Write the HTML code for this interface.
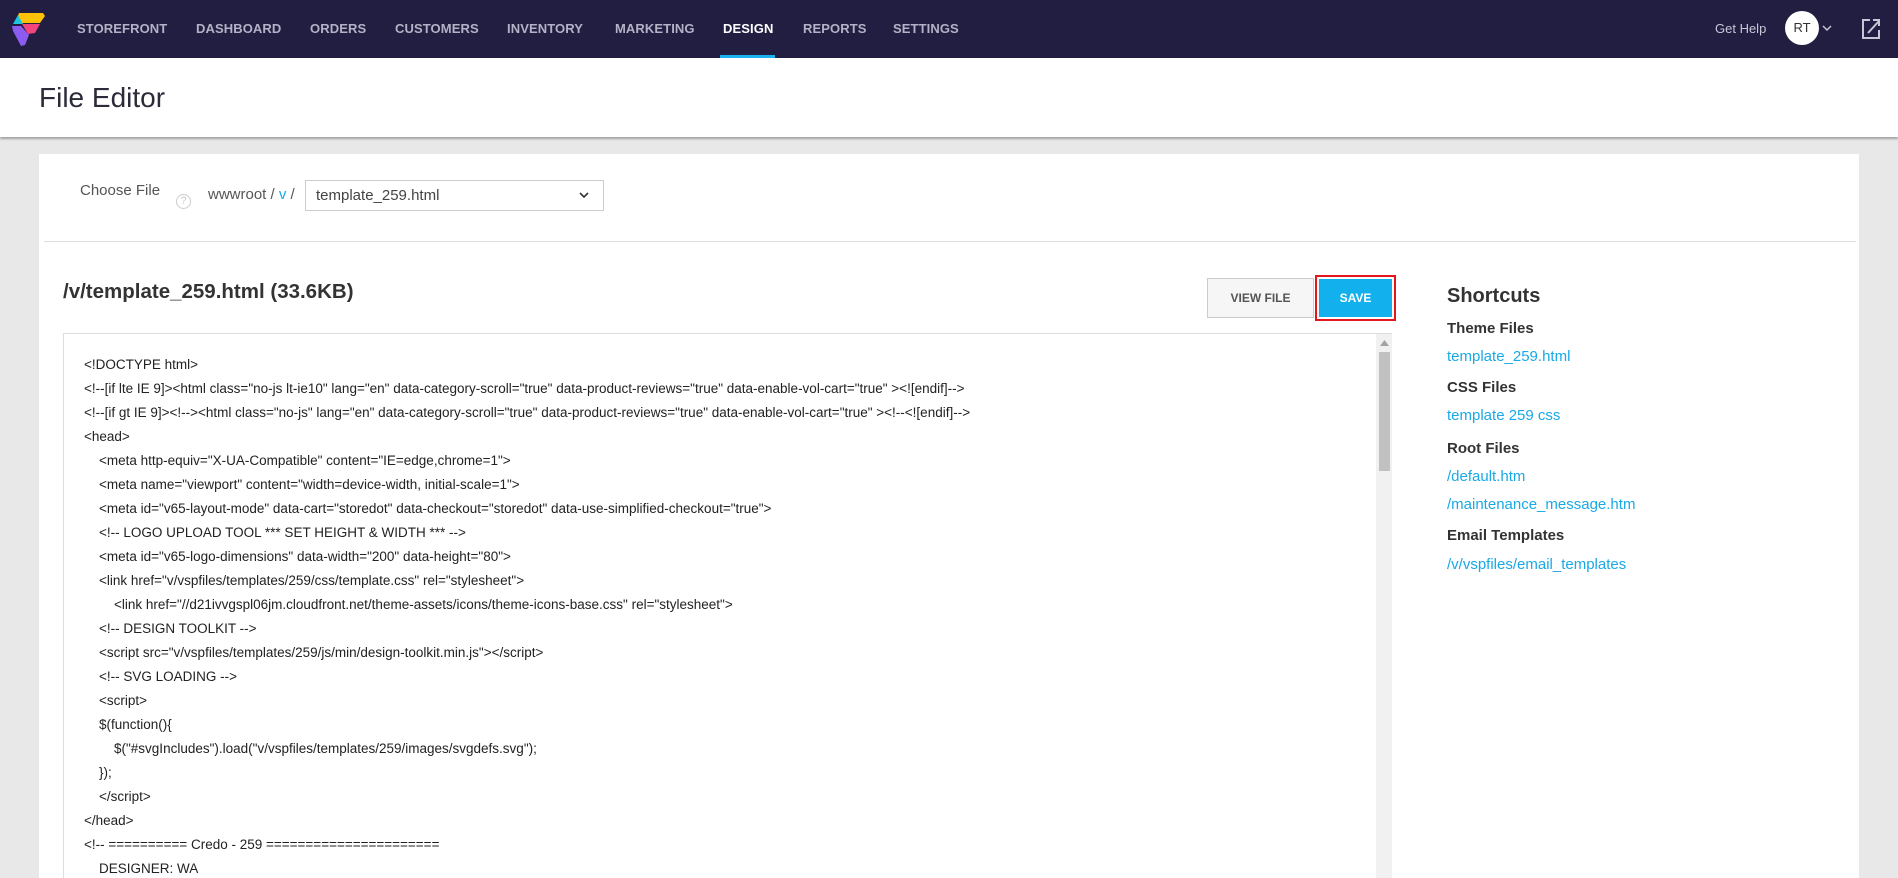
<!DOCTYPE html>
<html><head><style>
*{margin:0;padding:0;box-sizing:border-box}
html,body{width:1898px;height:878px;overflow:hidden}
body{background:#e8e8e8;font-family:"Liberation Sans",sans-serif;position:relative}
.nav{position:absolute;left:0;top:0;width:1898px;height:58px;background:#211e41}
.nav a{position:absolute;top:21px;font-size:13px;font-weight:bold;color:#b4b2c6;letter-spacing:0.1px}
.nav a.act{color:#fff}
.ul{position:absolute;left:720px;top:55px;width:55px;height:3px;background:#19b2ee}
.hdr{position:absolute;left:0;top:58px;width:1898px;height:79px;background:#fff;box-shadow:0 2px 2px rgba(0,0,0,.3)}
.hdr h1{position:absolute;left:39px;top:24px;font-size:28px;font-weight:normal;color:#2b2b3a}
.card{position:absolute;left:39px;top:154px;width:1820px;height:724px;background:#fff}
.a{position:absolute;white-space:nowrap}
.code{position:absolute;left:63px;top:333px;width:1329px;height:545px;border:1px solid #ddd;border-right:none;border-bottom:none;overflow:hidden}
.code div{position:absolute;white-space:pre;font-size:13.5px;color:#222}
.lnk{color:#19a9e6;font-size:15px}
.sh{font-size:15px;font-weight:bold;color:#333}
</style></head><body>
<div class="nav">
<svg style="position:absolute;left:0;top:0" width="60" height="58"><polygon points="19,13 43,13 45,16 40,23 22,23 17,18" fill="#ffc107"/><polygon points="22,24 40,24 35,33 28,34" fill="#f2457e"/><polygon points="13,24 18,15 23,24" fill="#1cc5e0"/><polygon points="12,26 21,26 29,35 25,45 21,46 13,31" fill="#8c5cf0"/></svg>
<a style="left:77px">STOREFRONT</a><a style="left:196px">DASHBOARD</a><a style="left:310px">ORDERS</a><a style="left:395px">CUSTOMERS</a><a style="left:507px">INVENTORY</a><a style="left:615px">MARKETING</a><a class="act" style="left:723px">DESIGN</a><a style="left:803px">REPORTS</a><a style="left:893px">SETTINGS</a>
<div class="ul"></div>
<span class="a" style="left:1715px;top:21px;font-size:13px;color:#c8c6d6">Get Help</span>
<div class="a" style="left:1785px;top:11px;width:34px;height:34px;border-radius:50%;background:#fff;color:#333;font-size:13px;text-align:center;line-height:34px">RT</div>
<svg class="a" style="left:1822px;top:24px" width="10" height="8"><path d="M1 2 L5 6 L9 2" stroke="#c8c6d6" stroke-width="1.5" fill="none"/></svg>
<svg class="a" style="left:1861px;top:18px" width="20" height="22"><path d="M9 2 H2 V20 H18 V12" stroke="#c8c6d6" stroke-width="2" fill="none"/><path d="M7 15 L18 3 M12 2 H18 V8" stroke="#c8c6d6" stroke-width="2" fill="none"/></svg>
</div>
<div class="hdr"><h1>File Editor</h1></div>
<div class="card"></div>
<span class="a" style="left:80px;top:182px;font-size:15px;color:#555">Choose File</span>
<div class="a" style="left:176px;top:194px;width:15px;height:15px;border:1px solid #ccc;border-radius:50%;font-size:11px;color:#ccc;text-align:center;line-height:13px">?</div>
<span class="a" style="left:208px;top:186px;font-size:15px;color:#555">wwwroot / <span style="color:#19a9e6">v</span> /</span>
<div class="a" style="left:305px;top:180px;width:299px;height:31px;border:1px solid #ccc"></div>
<span class="a" style="left:316px;top:187px;font-size:15px;color:#444">template_259.html</span>
<svg class="a" style="left:578px;top:191px" width="12" height="8"><path d="M2 2 L6 6 L10 2" stroke="#333" stroke-width="1.6" fill="none"/></svg>
<div class="a" style="left:44px;top:241px;width:1812px;height:1px;background:#ddd"></div>
<span class="a" style="left:63px;top:280px;font-size:20.5px;font-weight:bold;color:#333">/v/template_259.html (33.6KB)</span>
<div class="a" style="left:1207px;top:278px;width:107px;height:40px;border:1px solid #ccc;background:#f6f6f6;font-size:12px;font-weight:bold;color:#555;text-align:center;line-height:38px">VIEW FILE</div>
<div class="a" style="left:1315px;top:275px;width:81px;height:46px;border:2px solid #e3151d"></div>
<div class="a" style="left:1319px;top:279px;width:73px;height:38px;background:#12b1ee;font-size:12px;font-weight:bold;color:#fff;text-align:center;line-height:38px">SAVE</div>
<div class="code">
<div style="left:20px;top:23px">&lt;!DOCTYPE html&gt;</div>
<div style="left:20px;top:47px">&lt;!--[if lte IE 9]&gt;&lt;html class="no-js lt-ie10" lang="en" data-category-scroll="true" data-product-reviews="true" data-enable-vol-cart="true" &gt;&lt;![endif]--&gt;</div>
<div style="left:20px;top:71px">&lt;!--[if gt IE 9]&gt;&lt;!--&gt;&lt;html class="no-js" lang="en" data-category-scroll="true" data-product-reviews="true" data-enable-vol-cart="true" &gt;&lt;!--&lt;![endif]--&gt;</div>
<div style="left:20px;top:95px">&lt;head&gt;</div>
<div style="left:35px;top:119px">&lt;meta http-equiv="X-UA-Compatible" content="IE=edge,chrome=1"&gt;</div>
<div style="left:35px;top:143px">&lt;meta name="viewport" content="width=device-width, initial-scale=1"&gt;</div>
<div style="left:35px;top:167px">&lt;meta id="v65-layout-mode" data-cart="storedot" data-checkout="storedot" data-use-simplified-checkout="true"&gt;</div>
<div style="left:35px;top:191px">&lt;!-- LOGO UPLOAD TOOL *** SET HEIGHT &amp; WIDTH *** --&gt;</div>
<div style="left:35px;top:215px">&lt;meta id="v65-logo-dimensions" data-width="200" data-height="80"&gt;</div>
<div style="left:35px;top:239px">&lt;link href="v/vspfiles/templates/259/css/template.css" rel="stylesheet"&gt;</div>
<div style="left:50px;top:263px">&lt;link href="//d21ivvgspl06jm.cloudfront.net/theme-assets/icons/theme-icons-base.css" rel="stylesheet"&gt;</div>
<div style="left:35px;top:287px">&lt;!-- DESIGN TOOLKIT --&gt;</div>
<div style="left:35px;top:311px">&lt;script src="v/vspfiles/templates/259/js/min/design-toolkit.min.js"&gt;&lt;/script&gt;</div>
<div style="left:35px;top:335px">&lt;!-- SVG LOADING --&gt;</div>
<div style="left:35px;top:359px">&lt;script&gt;</div>
<div style="left:35px;top:383px">$(function(){</div>
<div style="left:50px;top:407px">$("#svgIncludes").load("v/vspfiles/templates/259/images/svgdefs.svg");</div>
<div style="left:35px;top:431px">});</div>
<div style="left:35px;top:455px">&lt;/script&gt;</div>
<div style="left:20px;top:479px">&lt;/head&gt;</div>
<div style="left:20px;top:503px">&lt;!-- ========== Credo - 259 ====================== </div>
<div style="left:35px;top:527px">DESIGNER: WA</div>
<div style="left:1312px;top:0;width:16px;height:545px;background:#f1f1f1"></div>
<div style="left:1315px;top:18px;width:11px;height:119px;background:#c1c1c1"></div>
<svg style="position:absolute;left:1316px;top:6px" width="9" height="6"><polygon points="0,6 4.5,0 9,6" fill="#a3a3a3"/></svg>
</div>
<span class="a" style="left:1447px;top:285px;font-size:20px;font-weight:bold;color:#333">Shortcuts</span>
<span class="a sh" style="left:1447px;top:320px">Theme Files</span>
<span class="a lnk" style="left:1447px;top:348px">template_259.html</span>
<span class="a sh" style="left:1447px;top:379px">CSS Files</span>
<span class="a lnk" style="left:1447px;top:407px">template 259 css</span>
<span class="a sh" style="left:1447px;top:440px">Root Files</span>
<span class="a lnk" style="left:1447px;top:468px">/default.htm</span>
<span class="a lnk" style="left:1447px;top:496px">/maintenance_message.htm</span>
<span class="a sh" style="left:1447px;top:527px">Email Templates</span>
<span class="a lnk" style="left:1447px;top:556px">/v/vspfiles/email_templates</span>
</body></html>
